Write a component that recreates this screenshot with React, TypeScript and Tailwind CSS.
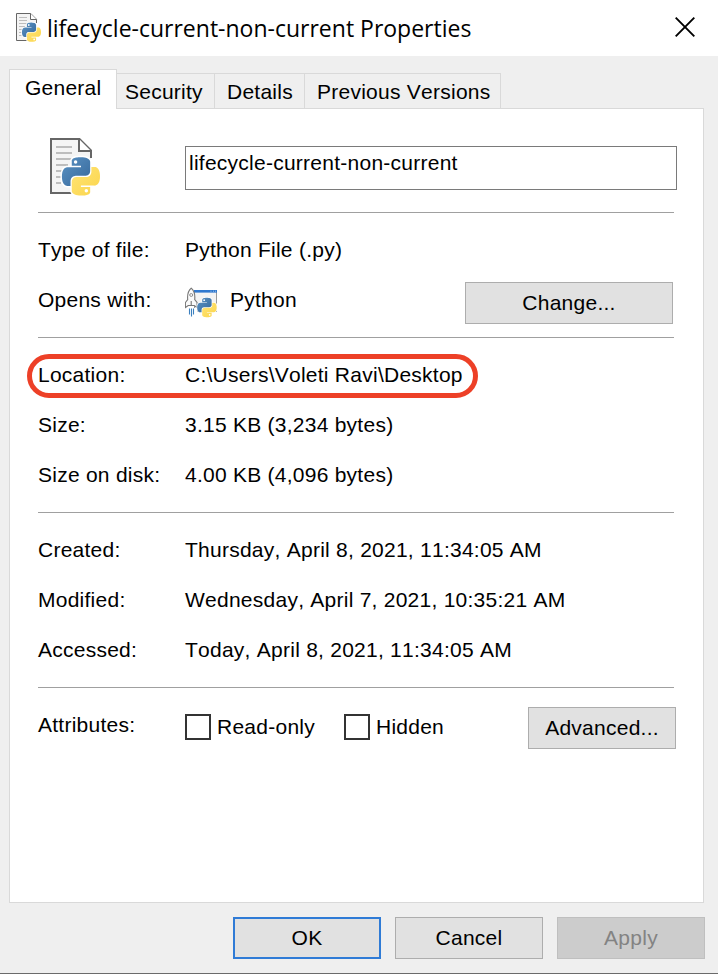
import type { ReactNode } from "react";

const SNAKE =
  "M14.25.18l.9.2.73.26.59.3.45.32.34.34.25.34.16.33.1.3.04.26.02.2-.01.13V8.5l-.05.63-.13.55-.21.46-.26.38-.3.31-.33.25-.35.19-.35.14-.33.1-.3.07-.26.04-.21.02H8.77l-.69.05-.59.14-.5.22-.41.27-.33.32-.27.35-.2.36-.15.37-.1.35-.07.32-.04.27-.02.21v3.06H3.17l-.21-.03-.28-.07-.32-.12-.35-.18-.36-.26-.36-.36-.35-.46-.32-.59-.28-.73-.21-.88-.14-1.05-.05-1.23.06-1.22.16-1.04.24-.87.32-.71.36-.57.4-.44.42-.33.42-.24.4-.16.36-.1.32-.05.24-.01h.16l.06.01h8.16v-.83H6.18l-.01-2.75-.02-.37.05-.34.11-.31.17-.28.25-.26.31-.23.38-.2.44-.18.51-.15.58-.12.64-.1.71-.06.77-.04.84-.02 1.27.05z";

function Snake({ fill, transform }: { fill: string; transform?: string }) {
  return (
    <g transform={transform}>
      <path d={SNAKE} fill={fill} />
      <circle cx="8.6" cy="3" r="1.1" fill="#fff" />
    </g>
  );
}

function PythonMark({ transform, outline }: { transform: string; outline: number }) {
  return (
    <g transform={transform}>
      <g fill="#fff" stroke="#fff" strokeWidth={outline} strokeLinejoin="round">
        <path d={SNAKE} />
        <path d={SNAKE} transform="rotate(180 12 12)" />
      </g>
      <Snake fill="url(#pyBlue)" />
      <Snake fill="url(#pyYellow)" transform="rotate(180 12 12)" />
    </g>
  );
}

function Gradients() {
  return (
    <svg width="0" height="0" className="absolute" aria-hidden="true">
      <defs>
        <linearGradient id="pyBlue" x1="0" y1="0" x2="1" y2="1">
          <stop offset="0" stopColor="#5b93c4" />
          <stop offset="1" stopColor="#35679a" />
        </linearGradient>
        <linearGradient id="pyYellow" x1="0" y1="0" x2="1" y2="1">
          <stop offset="0" stopColor="#fbd54a" />
          <stop offset="1" stopColor="#ffe477" />
        </linearGradient>
      </defs>
    </svg>
  );
}

function PythonFileIcon({ className }: { className: string }) {
  return (
    <svg viewBox="0 0 52 60" className={className} aria-hidden="true">
      <path d="M1 1H29.5L41 12.5V40H30V55H1Z" fill="#f4f4f4" />
      <path d="M41 20V12.500L29.500 1H1V55H22" fill="none" stroke="#666" strokeWidth="2" />
      <path d="M29 1V13H41" fill="#fff" stroke="#666" strokeWidth="2" />
      <path d="M6 9H22M6 15H22M6 21H35M6 27H18M6 33H14M6 39H12M6 45H11" stroke="#bdbdbd" strokeWidth="2" />
      <PythonMark transform="translate(12 19.2) scale(1.58 1.6)" outline={1.9} />
    </svg>
  );
}

function PythonLauncherIcon() {
  return (
    <svg viewBox="0 0 32 32" className="mt-[6px] h-8 w-8 shrink-0" aria-hidden="true">
      <rect x="9.5" y="3.5" width="22" height="21" fill="#f3f3f3" stroke="#9a9a9a" />
      <rect x="9" y="3" width="23" height="2.6" fill="#2f78cf" />
      <path d="M25.5 4.2h1M28 4.2h1M30 4.2h1" stroke="#b9d3f0" strokeWidth="0.8" />
      <rect x="0" y="21" width="12" height="11" fill="#fff" />
      <g transform="translate(-0.6 0) scale(1.1 1)">
        <path d="M6.2 1.2C3.2 4 2.6 8 3 12.5L.9 15.5v5l2.6-2h5.4l2.6 2v-5L9.4 12.5C9.8 8 9.2 4 6.2 1.2Z" fill="#fafafa" stroke="#777" />
        <circle cx="6.2" cy="8" r="1.4" fill="#fff" stroke="#777" strokeWidth="0.8" />
        <path d="M6.2 14v5" stroke="#777" />
      </g>
      <path d="M4.5 21.5v6M6.5 21.5v8M8.5 21.5v6" stroke="#3c80bf" strokeWidth="1.1" />
      <PythonMark transform="translate(12.2 10.8) scale(0.81)" outline={1.8} />
    </svg>
  );
}

function Field({ label, children }: { label: string; children: ReactNode }) {
  return (
    <div className="flex h-[50px] items-center">
      <div className="w-[147px] shrink-0">{label}</div>
      {children}
    </div>
  );
}

function Section({ children }: { children: ReactNode }) {
  return <section className="mr-[29px] border-t border-[#a0a0a0] py-3">{children}</section>;
}

function Check({ label }: { label: string }) {
  return (
    <label className="flex items-center gap-[6px]">
      <span className="h-[26px] w-[26px] border-2 border-[#333] bg-white" />
      {label}
    </label>
  );
}

export default function App() {
  return (
    <div
      className="flex h-[974px] w-[718px] flex-col overflow-hidden border-b border-[#6a6a6a] bg-[#efefef] text-[21px] leading-[30px] tracking-[0.25px] whitespace-nowrap text-black [font-kerning:none]"
      style={{ fontFamily: '"Liberation Sans", Arial, sans-serif' }}
    >
      <Gradients />
      <header className="flex h-14 shrink-0 items-start bg-white pr-[23px] pl-4">
        <PythonFileIcon className="mt-[13px] h-[30px] w-[26px]" />
        <h1
          className="mt-[13px] ml-[5px] flex-1 text-[23px] tracking-normal"
          style={{ fontFamily: '"Open Sans", "Noto Sans", sans-serif' }}
        >
          lifecycle-current-non-current Properties
        </h1>
        <svg viewBox="0 0 20 20" className="mt-[17px] h-5 w-5" aria-label="Close">
          <path d="M.7.7 19.3 19.3M19.3.7.7 19.3" stroke="#000" strokeWidth="1.9" />
        </svg>
      </header>

      <nav className="z-10 mt-[13px] ml-[9px] flex h-10 shrink-0 items-end">
        <div className="h-10 w-[108px] border border-b-0 border-[#d9d9d9] bg-white pt-[3px] pl-[15px]">General</div>
        <div className="mb-px flex h-[35px] border-t border-[#d9d9d9] pt-[3px]">
          <div className="-mt-[3px] w-[98px] border-r border-[#d9d9d9] pt-[3px] pl-2">Security</div>
          <div className="-mt-[3px] w-[90px] border-r border-[#d9d9d9] pt-[3px] pl-3">Details</div>
          <div className="-mt-[3px] w-[196px] border-r border-[#d9d9d9] pt-[3px] pl-3">Previous Versions</div>
        </div>
      </nav>

      <main className="-mt-px ml-[9px] h-[795px] w-[695px] shrink-0 border border-[#d9d9d9] bg-white pl-7">
        <div className="flex h-[103px] items-start">
          <div className="w-[147px] pt-[29px] pl-3">
            <PythonFileIcon className="h-[60px] w-[52px]" />
          </div>
          <div className="mt-[37px] h-11 w-[492px] border border-[#7a7a7a] pt-px pl-[3px]">lifecycle-current-non-current</div>
        </div>
        <Section>
          <Field label="Type of file:">Python File (.py)</Field>
          <Field label="Opens with:">
            <PythonLauncherIcon />
            <span className="ml-[13px] flex-1">Python</span>
            <button className="mt-[6px] mr-px h-[42px] w-[208px] border border-[#adadad] bg-[#e1e1e1]">Change...</button>
          </Field>
        </Section>
        <Section>
          <div className="relative">
            <Field label="Location:">C:\Users\Voleti Ravi\Desktop</Field>
            <div className="absolute top-1 -left-[11px] h-11 w-[451px] rounded-full border-[5px] border-[#ed4027]" />
          </div>
          <Field label="Size:">3.15 KB (3,234 bytes)</Field>
          <Field label="Size on disk:">4.00 KB (4,096 bytes)</Field>
        </Section>
        <Section>
          <Field label="Created:">Thursday, April 8, 2021, 11:34:05 AM</Field>
          <Field label="Modified:">Wednesday, April 7, 2021, 10:35:21 AM</Field>
          <Field label="Accessed:">Today, April 8, 2021, 11:34:05 AM</Field>
        </Section>
        <Section>
          <Field label="Attributes:">
            <div className="-mr-[2px] flex flex-1 items-center pt-1">
              <Check label="Read-only" />
              <div className="ml-[29px] flex-1">
                <Check label="Hidden" />
              </div>
              <button className="mt-[2px] h-[42px] w-[148px] border border-[#adadad] bg-[#e1e1e1]">Advanced...</button>
            </div>
          </Field>
        </Section>
      </main>

      <footer className="mt-[14px] ml-[233px] flex gap-[14px]">
        <button className="h-[42px] w-[148px] border-2 border-[#2f7bd6] bg-[#e1e1e1]">OK</button>
        <button className="h-[42px] w-[148px] border border-[#adadad] bg-[#e1e1e1]">Cancel</button>
        <button className="h-[42px] w-[148px] border border-[#bfbfbf] bg-[#cccccc] text-[#838383]">Apply</button>
      </footer>
    </div>
  );
}
